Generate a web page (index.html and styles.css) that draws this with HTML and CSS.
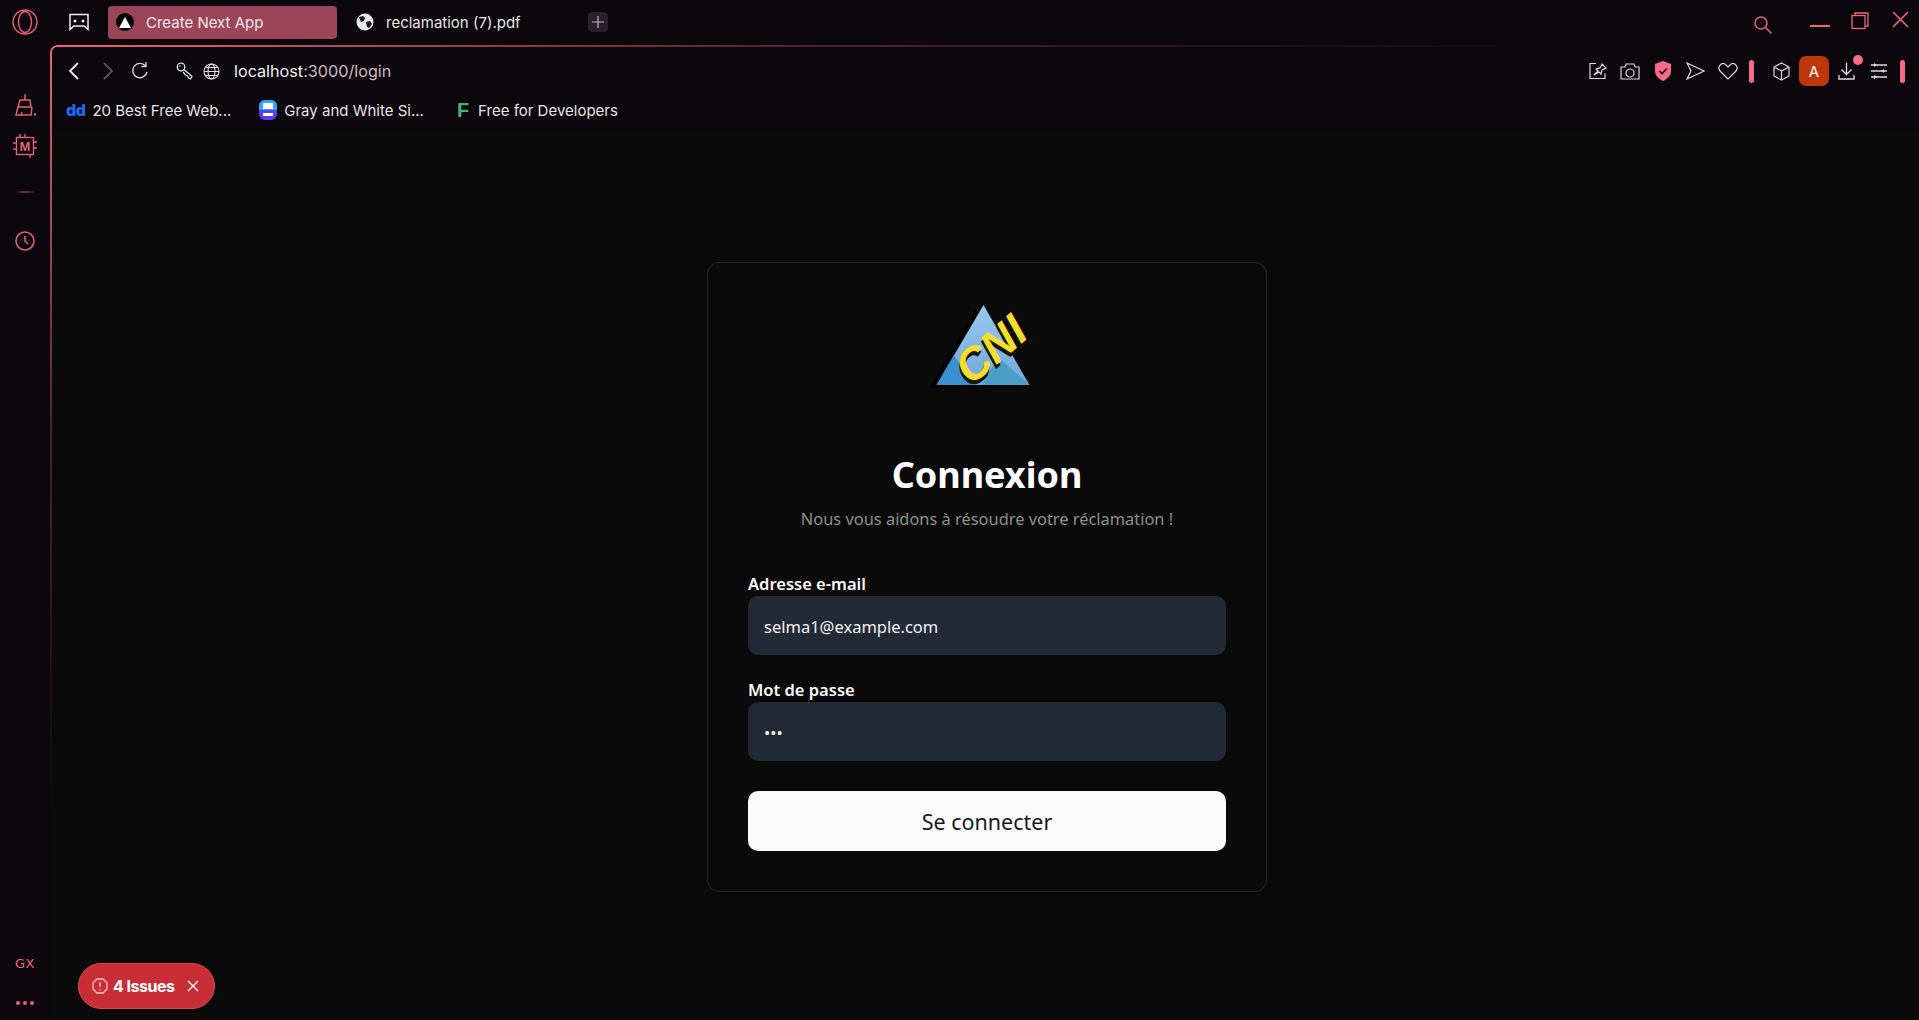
FILE: index.html
```html
<!DOCTYPE html>
<html lang="en">
<head>
    <meta charset="UTF-8">
    <meta name="viewport" content="width=device-width, initial-scale=1.0">
    <title>Create Next App</title>
    <link rel="stylesheet" href="styles.css">
</head>
<body>

    <!-- Tab strip -->
    <header class="tabbar">
        <svg class="opera-logo" width="26" height="26" viewBox="0 0 26 26" fill="none" stroke="#e8607a" stroke-width="1.4">
            <circle cx="13" cy="13" r="12"/>
            <ellipse cx="13" cy="13" rx="6.5" ry="10.5"/>
        </svg>
        <svg class="game-icon" width="20" height="18" viewBox="0 0 20 18" fill="none" stroke="#eee" stroke-width="1.5">
            <path d="M1 1.500h18v15l-4-3.500H5l-4 3.500z"/>
            <circle cx="6" cy="8" r="1.500" fill="#eee" stroke="none"/>
            <circle cx="14" cy="8" r="1.500" fill="#eee" stroke="none"/>
        </svg>
        <div class="tab tab-active">
            <span class="tab-favicon">
                <svg width="12" height="11" viewBox="0 0 12 11"><path d="M6 0l6 11H0z" fill="#fff"/></svg>
            </span>
            <span>Create Next App</span>
        </div>
        <div class="tab">
            <svg class="tab-globe" width="18" height="18" viewBox="0 0 18 18">
                <circle cx="9" cy="9" r="8.5" fill="#e8e8e8"/>
                <path d="M3 4l4-1 2 2-1 3-3 1zM10 9l4-1 2 3-3 4-2-1z" fill="#16121a"/>
            </svg>
            <span>reclamation (7).pdf</span>
        </div>
        <div class="new-tab">
            <svg width="12" height="12" viewBox="0 0 12 12" stroke="#bbb" stroke-width="1.2"><path d="M6 0v12M0 6h12"/></svg>
        </div>
        <div class="window-controls">
            <svg class="win-search" width="20" height="20" viewBox="0 0 20 20" fill="none" stroke="#d9607a" stroke-width="1.6">
                <circle cx="8" cy="8" r="6"/><path d="M12.5 12.5l6 6"/>
            </svg>
            <svg class="win-min" width="20" height="2" viewBox="0 0 20 2"><path d="M0 1h20" stroke="#ee6680" stroke-width="2"/></svg>
            <svg class="win-restore" width="18" height="18" viewBox="0 0 18 18" fill="none" stroke="#ee6680" stroke-width="1.3">
                <rect x="1" y="3.5" width="13" height="13"/><path d="M4 3.5V1h13v13h-3"/>
            </svg>
            <svg class="win-close" width="17" height="17" viewBox="0 0 17 17" stroke="#ee6680" stroke-width="1.6"><path d="M1 1l15 15M16 1L1 16"/></svg>
        </div>
    </header>

    <div class="window-body">
        <!-- Left sidebar -->
        <aside class="sidebar">
            <div class="side-top">
                <svg width="24" height="24" viewBox="0 0 24 24" fill="none" stroke="#e2607a" stroke-width="1.5">
                    <path d="M12 1v6M7 7h10l1 7H5zM5 14l-2 8h15l1-8M8 22l1-3"/>
                    <circle cx="22" cy="21.500" r="1.300" fill="#e2607a" stroke="none"/>
                </svg>
                <svg width="24" height="24" viewBox="0 0 24 24" fill="none" stroke="#e2607a" stroke-width="1.4">
                    <rect x="3.5" y="3.5" width="17" height="17"/>
                    <path d="M7 0v3.5M12 0v3.5M17 20.500V24M0 9h3.500M0 15h3.500M20.500 8H24M20.500 14H24"/>
                    <text x="12" y="17" class="chip-letter">M</text>
                </svg>
                <div class="side-sep"></div>
                <svg class="side-clock" width="20" height="20" viewBox="0 0 20 20" fill="none" stroke="#e2607a" stroke-width="1.6">
                    <circle cx="10" cy="10" r="9"/><path d="M10 5v5l3 3"/>
                </svg>
            </div>
            <div class="side-bottom">
                <span class="gx-label">GX</span>
                <div class="side-dots"><i></i><i></i><i></i></div>
            </div>
        </aside>

        <div class="frame">
            <!-- Address bar -->
            <div class="toolbar">
                <svg class="nav-back" width="12" height="18" viewBox="0 0 12 18" fill="none" stroke="#f2f2f2" stroke-width="1.8"><path d="M10 1L2 9l8 8"/></svg>
                <svg class="nav-forward" width="12" height="18" viewBox="0 0 12 18" fill="none" stroke="#555" stroke-width="1.8"><path d="M2 1l8 8-8 8"/></svg>
                <svg class="nav-reload" width="18" height="18" viewBox="0 0 18 18" fill="none" stroke="#d8d8d8" stroke-width="1.4"><path d="M14.500 4A7.200 7.200 0 1 0 16 10M15 0v4.500h-4.500"/></svg>
                <svg class="addr-key" width="18" height="18" viewBox="0 0 18 18" fill="none" stroke="#e0e0e0" stroke-width="1.3">
                    <circle cx="5" cy="5" r="3.800"/><circle cx="4" cy="4" r="0.800" fill="#e0e0e0" stroke="none"/><path d="M8 7.500l8 7-1.500 2.500-2-1-1-2-2-1-2.500-3"/>
                </svg>
                <svg class="addr-globe" width="17" height="17" viewBox="0 0 17 17" fill="none" stroke="#e0e0e0" stroke-width="1.100">
                    <circle cx="8.500" cy="8.500" r="7.500"/><ellipse cx="8.500" cy="8.500" rx="3.500" ry="7.500"/><path d="M1 8.500h15M2 4.500h13M2 12.500h13"/>
                </svg>
                <div class="address"><span class="addr-host">localhost</span>:3000/login</div>

                <div class="toolbar-right">
                    <span class="tool">
                        <svg width="18" height="18" viewBox="0 0 18 18" fill="none" stroke="#dcdcdc" stroke-width="1.200">
                            <path d="M7 1.500H1v15h15v-5M5 13l4-4-2-2 4-1 2-4 4 4-4 2-1 4-2-2z"/>
                        </svg>
                    </span>
                    <span class="tool">
                        <svg width="20" height="17" viewBox="0 0 20 17" fill="none" stroke="#dcdcdc" stroke-width="1.200">
                            <path d="M1 4h4l1-3h8l1 3h4v12H1z"/><circle cx="10" cy="10" r="4"/>
                        </svg>
                    </span>
                    <span class="tool">
                        <svg width="18" height="20" viewBox="0 0 18 20">
                            <path d="M9 0l8 3v7c0 5-4 8-8 10-4-2-8-5-8-10V3z" fill="#fa6a8a"/>
                            <path d="M5.500 10l2.500 2.500 5-5" fill="none" stroke="#1a0c12" stroke-width="1.600"/>
                        </svg>
                    </span>
                    <span class="tool">
                        <svg width="19" height="18" viewBox="0 0 19 18" fill="none" stroke="#dcdcdc" stroke-width="1.200"><path d="M1 1l17 8-17 8 4-8z"/></svg>
                    </span>
                    <span class="tool">
                        <svg width="20" height="17" viewBox="0 0 20 17" fill="none" stroke="#dcdcdc" stroke-width="1.200">
                            <path d="M10 16L2 8C-1 4 3-1 7 1l3 3 3-3c4-2 8 3 5 7z"/>
                        </svg>
                    </span>
                    <span class="tool-bar"></span>
                    <span class="tool tool-cube">
                        <svg width="17" height="19" viewBox="0 0 17 19" fill="none" stroke="#dcdcdc" stroke-width="1.200">
                            <path d="M8.500 1L16 5v9l-7.500 4L1 14V5zM1 5l7.500 4L16 5M8.500 9v9"/>
                        </svg>
                    </span>
                    <span class="tool"><span class="avatar">A</span></span>
                    <span class="tool tool-download">
                        <svg width="17" height="18" viewBox="0 0 17 18" fill="none" stroke="#dcdcdc" stroke-width="1.300">
                            <path d="M8.500 1v11M3.500 7.500l5 5 5-5M1 13v4h15v-4"/>
                        </svg>
                        <i class="download-dot"></i>
                    </span>
                    <span class="tool">
                        <svg width="16" height="16" viewBox="0 0 16 16" stroke="#dcdcdc" stroke-width="1.300">
                            <path d="M0 2h16M0 8h16M0 14h16"/>
                            <path d="M3 0l3 2-3 2zM13 6l-3 2 3 2zM3 12l3 2-3 2z" fill="#dcdcdc" stroke="none"/>
                        </svg>
                    </span>
                    <span class="tool-bar tool-bar-end"></span>
                </div>
            </div>

            <!-- Bookmarks -->
            <nav class="bookmarks">
                <div class="bookmark">
                    <span class="bm-dd">dd</span>
                    <span>20 Best Free Web...</span>
                </div>
                <div class="bookmark">
                    <svg width="18" height="20" viewBox="0 0 18 20">
                        <rect width="18" height="20" rx="6" fill="#5a3df0"/>
                        <path d="M0 6a6 6 0 0 1 6-6h6a6 6 0 0 1 6 6v4H0z" fill="#2ea8f0"/>
                        <rect x="4" y="3" width="10" height="6" fill="#fff"/>
                        <rect x="4" y="13" width="10" height="3" fill="#fff"/>
                    </svg>
                    <span>Gray and White Si...</span>
                </div>
                <div class="bookmark">
                    <span class="bm-f">F</span>
                    <span>Free for Developers</span>
                </div>
            </nav>

            <!-- Login page -->
            <main class="page">
                <section class="card">
                    <svg class="logo" width="120" height="100" viewBox="0 0 120 100">
                        <defs>
                            <linearGradient id="triSky" x1="0" y1="0" x2="0" y2="1">
                                <stop offset="0" stop-color="#9cc6ee"/>
                                <stop offset="1" stop-color="#6fa9da"/>
                            </linearGradient>
                        </defs>
                        <path d="M50 4L3 85h93z" fill="#000"/>
                        <path d="M56.500 2L9.500 82h93z" fill="url(#triSky)"/>
                        <path d="M9.500 82L27 52l20 30z" fill="#3a8fd2"/>
                        <path d="M55 82l16-28 31.500 28z" fill="#4a9dc6"/>
                        <text x="63" y="64" class="logo-text logo-shadow" transform="rotate(-40 66 49)">CNI</text>
                        <text x="66" y="61" class="logo-text" transform="rotate(-40 66 49)">CNI</text>
                    </svg>
                    <h1 class="card-title">Connexion</h1>
                    <p class="card-sub">Nous vous aidons à résoudre votre réclamation !</p>

                    <form class="login-form">
                        <div class="form-group">
                            <label for="email">Adresse e-mail</label>
                            <input type="text" id="email" value="selma1@example.com">
                        </div>
                        <div class="form-group">
                            <label for="password">Mot de passe</label>
                            <input type="password" id="password" value="123">
                        </div>
                        <button type="button">Se connecter</button>
                    </form>
                </section>
            </main>
        </div>
    </div>

    <!-- Next.js dev badge -->
    <div class="issues-badge">
        <svg width="16" height="16" viewBox="0 0 16 16" fill="none" stroke="#f3c4c7" stroke-width="1.300">
            <path d="M5 1h6l4 4v6l-4 4H5l-4-4V5z"/><path d="M8 4v5M8 11v1.500"/>
        </svg>
        <span class="issues-text">4 Issues</span>
        <svg class="issues-close" width="12" height="12" viewBox="0 0 12 12" stroke="#fff" stroke-width="1.300"><path d="M1 1l10 10M11 1L1 11"/></svg>
    </div>

</body>
</html>
```

FILE: styles.css
```css
* {
    box-sizing: border-box;
}
html, body {
    height: 100%;
}
body {
    margin: 0;
    background-color: #0b070c;
    color: #eee;
    font-family: Inter, "Liberation Sans", sans-serif;
    overflow: hidden;
    display: flex;
    flex-direction: column;
}

/* tab strip */
.tabbar {
    height: 46px;
    flex: none;
    display: flex;
    align-items: center;
    padding: 0 0 2px 12px;
}
.opera-logo {
    flex: none;
}
.game-icon {
    margin-left: 31px;
    margin-right: 19px;
}
.tab {
    display: flex;
    align-items: center;
    height: 33px;
    width: 229px;
    padding-left: 8px;
    gap: 12px;
    font-size: 15px;
    color: #e6e6e6;
    border-radius: 4px;
}
.tab-active {
    background-color: #9a4558;
    color: #f5e6ea;
}
.tab-favicon {
    width: 18px;
    height: 18px;
    background-color: #000;
    border-radius: 50%;
    display: flex;
    align-items: center;
    justify-content: center;
}
.tab-globe {
    margin-left: 11px;
}
.new-tab {
    width: 20px;
    height: 20px;
    margin-left: 22px;
    background-color: #2a1f2c;
    border-radius: 4px;
    display: flex;
    align-items: center;
    justify-content: center;
}
.window-controls {
    margin-left: auto;
    display: flex;
    align-items: center;
    padding-right: 10px;
}
.win-search {
    margin-top: 5px;
    margin-right: 37px;
}
.win-min {
    margin-top: 8px;
    margin-right: 21px;
}
.win-restore {
    margin-top: -3px;
    margin-right: 23px;
}
.win-close {
    margin-top: -5px;
}

/* sidebar */
.window-body {
    flex: 1;
    display: flex;
    min-height: 0;
}
.sidebar {
    width: 51px;
    flex: none;
    display: flex;
    flex-direction: column;
    justify-content: space-between;
    align-items: center;
    padding: 47px 1px 15px 0;
}
.side-top {
    display: flex;
    flex-direction: column;
    align-items: center;
    gap: 17px;
}
.chip-letter {
    font-family: "Liberation Sans", sans-serif;
    font-size: 13px;
    font-weight: 700;
    fill: #e2607a;
    stroke: none;
    text-anchor: middle;
}
.side-sep {
    width: 24px;
    height: 2px;
    margin-top: 16px;
    background: radial-gradient(ellipse at center, #c85a70, transparent 70%);
}
.side-clock {
    margin-top: 21px;
}
.side-bottom {
    display: flex;
    flex-direction: column;
    align-items: center;
    gap: 30px;
}
.gx-label {
    font-family: "DejaVu Sans", sans-serif;
    font-size: 13px;
    letter-spacing: 0.5px;
    color: #f0627e;
}
.side-dots {
    display: flex;
    gap: 3px;
}
.side-dots i {
    width: 4px;
    height: 4px;
    border-radius: 50%;
    background-color: #e8607a;
}

/* browser frame */
.frame {
    position: relative;
    flex: 1;
    min-width: 0;
    display: flex;
    flex-direction: column;
    background-color: #0a0a0a;
}
.frame::before {
    content: "";
    position: absolute;
    top: -1px;
    left: -1px;
    right: 0;
    bottom: 0;
    border-top: 2px solid #f0647e;
    border-left: 2px solid #f0647e;
    border-top-left-radius: 7px;
    -webkit-mask-image: linear-gradient(to bottom right, #000, rgba(0, 0, 0, 0.3) 20%, transparent 40%);
    mask-image: linear-gradient(to bottom right, #000, rgba(0, 0, 0, 0.3) 20%, transparent 40%);
    pointer-events: none;
}
.toolbar {
    height: 48px;
    flex: none;
    display: flex;
    align-items: center;
    background-color: #0b070c;
    padding: 2px 0 0 17px;
}
.nav-forward {
    margin-left: 22px;
}
.nav-reload {
    margin-left: 17px;
}
.addr-key {
    margin-left: 27px;
}
.addr-globe {
    margin-left: 9px;
}
.address {
    margin-left: 14px;
    font-size: 16.2px;
    color: #d8b8c8;
}
.addr-host {
    color: #f2f2f2;
}
.toolbar-right {
    margin-left: auto;
    display: flex;
    align-items: center;
    padding-right: 14.5px;
}
.tool {
    width: 32.5px;
    display: flex;
    align-items: center;
    justify-content: center;
}
.tool-bar {
    width: 5px;
    height: 23px;
    margin-left: 5.25px;
    border-radius: 3px;
    background-color: #f8688a;
}
.tool-bar-end {
    margin-left: 4.25px;
}
.tool-cube {
    margin-left: 11.25px;
}
.avatar {
    width: 30px;
    height: 30px;
    flex: none;
    border-radius: 7px;
    background-color: #bd360c;
    color: #fff;
    font-size: 15px;
    display: flex;
    align-items: center;
    justify-content: center;
}
.tool-download {
    position: relative;
}
.download-dot {
    position: absolute;
    top: -7px;
    right: 0;
    width: 10px;
    height: 10px;
    border-radius: 50%;
    background-color: #fa6a8a;
}

.bookmarks {
    height: 39px;
    flex: none;
    display: flex;
    align-items: center;
    gap: 28px;
    padding: 0 0 7px 15px;
    font-size: 15px;
    color: #e8e4e6;
    background-color: #0b070c;
}
.bookmark {
    display: flex;
    align-items: center;
    gap: 7px;
}
.bookmark:nth-child(3) {
    margin-left: 5px;
    gap: 9px;
}
.bm-dd {
    color: #1a6ef5;
    font-weight: 800;
    font-size: 16px;
    letter-spacing: -0.5px;
}
.bm-f {
    color: #3fb47c;
    font-weight: 800;
    font-size: 20px;
    font-family: "Liberation Sans", sans-serif;
}

/* login page */
.page {
    flex: 1;
    display: flex;
    align-items: center;
    justify-content: center;
    padding-left: 4px;
    font-family: "Noto Sans", sans-serif;
}
.card {
    width: 560px;
    padding: 40px;
    display: flex;
    flex-direction: column;
    align-items: center;
    background-color: #0a0a0a;
    border: 1px solid #27272a;
    border-radius: 12px;
}
.logo {
    display: block;
    margin-bottom: 52px;
}
.logo-text {
    font-family: "Liberation Sans", sans-serif;
    font-size: 45px;
    font-weight: 700;
    font-style: italic;
    fill: #f6dd2b;
    text-anchor: middle;
}
.logo-shadow {
    fill: #14140c;
}
.card-title {
    margin: 0;
    font-size: 36px;
    line-height: 40px;
    font-weight: 700;
    color: #fff;
}
.card-sub {
    margin: 10px 0 37px;
    font-size: 16.4px;
    line-height: 28px;
    color: #8f8f8f;
}
.login-form {
    width: 100%;
    display: flex;
    flex-direction: column;
}
.form-group {
    margin-bottom: 21px;
}
.form-group label {
    display: block;
    height: 26px;
    line-height: 28px;
    font-size: 16.5px;
    font-weight: 600;
    color: #fafafa;
}
.form-group input {
    display: block;
    width: 100%;
    height: 59px;
    padding: 2px 16px 0;
    border: none;
    border-radius: 10px;
    background-color: #222a37;
    color: #f2f2f2;
    font-family: inherit;
    font-size: 16.5px;
    outline: none;
}
.login-form button {
    height: 60px;
    margin-top: 9px;
    padding-top: 2px;
    border: none;
    border-radius: 10px;
    background-color: #fafafa;
    color: #18181b;
    font-family: inherit;
    font-size: 21.5px;
    cursor: pointer;
}

/* floating dev badge */
.issues-badge {
    position: absolute;
    left: 78px;
    top: 963px;
    width: 137px;
    height: 46px;
    display: flex;
    align-items: center;
    padding-left: 13px;
    background-color: #c92d36;
    border: 1px solid #d84a50;
    border-radius: 23px;
    color: #fff;
    font-family: Inter, sans-serif;
    font-size: 16px;
    font-weight: 700;
}
.issues-text {
    margin-left: 5px;
    letter-spacing: -0.5px;
}
.issues-close {
    margin-left: 13px;
}
```
